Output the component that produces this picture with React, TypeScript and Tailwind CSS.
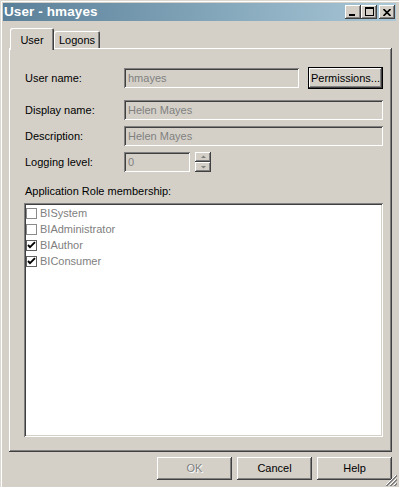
import React from "react";

const raised =
  "shadow-[inset_-1px_-1px_#404040,inset_1px_1px_#ffffff,inset_-2px_-2px_#808080,inset_2px_2px_#d4d0c8]";
const sunken =
  "shadow-[inset_1px_1px_#808080,inset_-1px_-1px_#ffffff,inset_2px_2px_#404040,inset_-2px_-2px_#d4d0c8]";

function Input({ w, value }: { w: string; value: string }) {
  return (
    <div className={`${w} h-[20px] ${sunken} bg-[#d4d0c8] flex items-center pl-[4px] text-[#808080] leading-none`}>
      {value}
    </div>
  );
}

function Check({ checked }: { checked: boolean }) {
  return (
    <div
      className={`w-[11px] h-[11px] bg-white border ${checked ? "border-[#606060]" : "border-[#8a8a8a]"} flex items-center justify-center`}
    >
      {checked && (
        <svg width="9" height="9" viewBox="0 0 9 9">
          <path d="M1 4 L3 6.2 L8 1.2" stroke="#000" strokeWidth="1.9" fill="none" />
        </svg>
      )}
    </div>
  );
}

function Btn({ children, disabled }: { children: React.ReactNode; disabled?: boolean }) {
  return (
    <div
      className={`w-[75px] h-[23px] ${raised} flex items-center justify-center ${
        disabled ? "text-[#808080] [text-shadow:1px_1px_0_#ffffff]" : "text-black"
      }`}
    >
      {children}
    </div>
  );
}

export default function App() {
  const roles = [
    { name: "BISystem", checked: false },
    { name: "BIAdministrator", checked: false },
    { name: "BIAuthor", checked: true },
    { name: "BIConsumer", checked: true },
  ];
  return (
    <div className="relative w-[399px] h-[487px] bg-[#d4d0c8] p-[3px] shadow-[inset_1px_1px_#dcd9d3,inset_2px_2px_#ffffff] font-['Liberation_Sans',Arial,sans-serif] text-[11px] text-black overflow-hidden">
      {/* Title bar */}
      <div className="h-[18px] bg-gradient-to-r from-[#5a8099] to-[#a9c8d7] flex items-center justify-between pl-[1px] pr-[1px]">
        <div className="text-white font-bold text-[13.5px] leading-none tracking-[0.1px]">User - hmayes</div>
        <div className="flex items-center">
          <div className={`w-[16px] h-[14px] bg-[#d4d0c8] ${raised} relative`}>
            <div className="absolute left-[4px] top-[9px] w-[6px] h-[2px] bg-black" />
          </div>
          <div className={`w-[16px] h-[14px] bg-[#d4d0c8] ${raised} flex items-center justify-center`}>
            <div className="w-[9px] h-[9px] border border-black border-t-2 -mt-[1px]" />
          </div>
          <div className={`ml-[2px] w-[16px] h-[14px] bg-[#d4d0c8] ${raised} flex items-center justify-center`}>
            <svg width="8" height="7" viewBox="0 0 8 7">
              <path d="M0.5 0 L7.5 7 M7.5 0 L0.5 7" stroke="#000" strokeWidth="1.6" />
            </svg>
          </div>
        </div>
      </div>

      {/* Tabs */}
      <div className="mt-[7px] ml-[7px] flex items-start h-[22px] -mb-[2px] relative z-10">
        <div className="w-[44px] h-[22px] bg-[#d4d0c8] rounded-t-[2px] shadow-[inset_1px_1px_#ffffff,inset_-1px_0_#404040,inset_-2px_0_#808080] flex justify-center pt-[5px] leading-[14px]">
          User
        </div>
        <div className="mt-[3px] w-[46px] h-[17px] rounded-t-[2px] shadow-[inset_1px_1px_#ffffff,inset_-1px_0_#404040,inset_-2px_0_#808080] flex justify-center pt-[2px] leading-[14px]">
          Logons
        </div>
      </div>

      {/* Panel */}
      <div className={`ml-[6px] w-[383px] h-[404px] ${raised} pl-[16px] pt-[19px] flex flex-col`}>
        <div className="flex items-center h-[22px]">
          <div className="w-[99px]">User name:</div>
          <Input w="w-[175px]" value="hmayes" />
          <div className="ml-[9px] w-[75px] h-[22px] shadow-[inset_0_0_0_1px_#000000,inset_-2px_-2px_#404040,inset_2px_2px_#ffffff,inset_-3px_-3px_#808080] flex items-center justify-center">
            Permissions...
          </div>
        </div>
        <div className="mt-[11px] flex items-center">
          <div className="w-[99px]">Display name:</div>
          <Input w="w-[259px]" value="Helen Mayes" />
        </div>
        <div className="mt-[6px] flex items-center">
          <div className="w-[99px]">Description:</div>
          <Input w="w-[259px]" value="Helen Mayes" />
        </div>
        <div className="mt-[6px] flex items-center">
          <div className="w-[99px]">Logging level:</div>
          <Input w="w-[66px]" value="0" />
          <div className="ml-[5px] flex flex-col">
            <div className={`w-[16px] h-[10px] ${raised} flex items-center justify-center`}>
              <svg width="5" height="4" viewBox="0 0 5 4">
                <path d="M0 3 L2.5 0.5 L5 3 Z" fill="#808080" />
              </svg>
            </div>
            <div className={`w-[16px] h-[10px] ${raised} flex items-center justify-center`}>
              <svg width="5" height="4" viewBox="0 0 5 4">
                <path d="M0 1 L2.5 3.5 L5 1 Z" fill="#808080" />
              </svg>
            </div>
          </div>
        </div>
        <div className="mt-[12px] h-[14px] leading-[14px]">Application Role membership:</div>
        <div className={`mt-[5px] -ml-[1px] w-[359px] h-[234px] bg-white ${sunken} pt-[2px] pl-[2px]`}>
          {roles.map((r) => (
            <div key={r.name} className="h-[16px] flex items-center">
              <Check checked={r.checked} />
              <span className="ml-[3px] text-[#808080]">{r.name}</span>
            </div>
          ))}
        </div>
      </div>

      {/* Bottom buttons */}
      <div className="mt-[5px] ml-[6px] w-[383px] flex justify-end gap-[5px]">
        <Btn disabled>OK</Btn>
        <Btn>Cancel</Btn>
        <Btn>Help</Btn>
      </div>

      {/* Size grip */}
      <svg className="absolute right-[2px] bottom-[1px]" width="12" height="12" viewBox="0 0 12 12">
        <path d="M11 1 L1 11" stroke="#ffffff" strokeWidth="1" />
        <path d="M12 1 L1 12 M12 2 L2 12" stroke="#808080" strokeWidth="1" />
        <path d="M11 5 L5 11" stroke="#ffffff" strokeWidth="1" />
        <path d="M12 5 L5 12 M12 6 L6 12" stroke="#808080" strokeWidth="1" />
        <path d="M11 9 L9 11" stroke="#ffffff" strokeWidth="1" />
        <path d="M12 9 L9 12 M12 10 L10 12" stroke="#808080" strokeWidth="1" />
      </svg>
    </div>
  );
}
